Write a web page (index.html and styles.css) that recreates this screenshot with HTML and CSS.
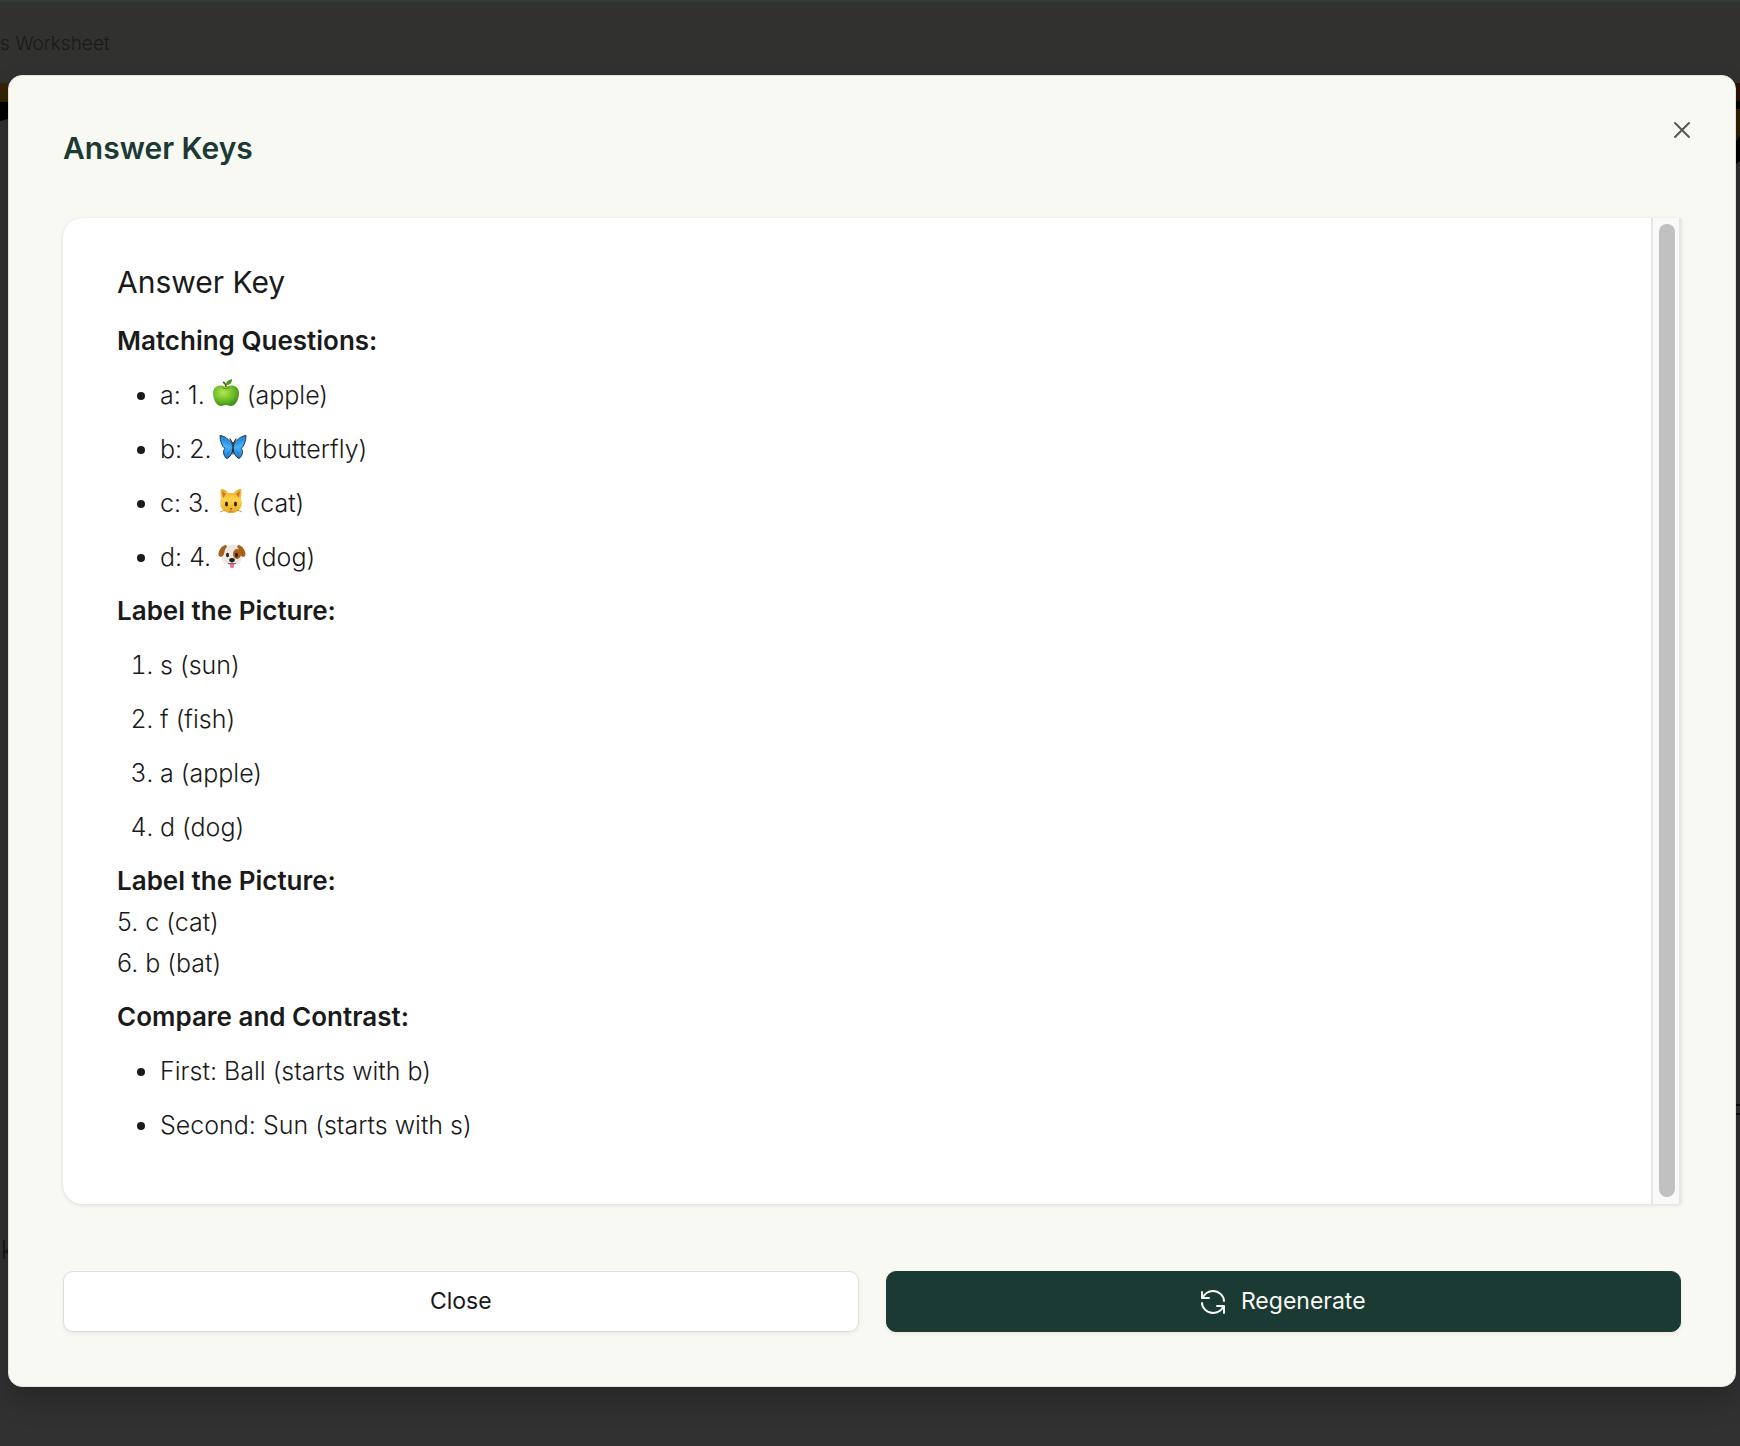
FILE: index.html
```html
<!DOCTYPE html>
<html lang="en">
<head>
  <meta charset="UTF-8">
  <meta name="viewport" content="width=device-width, initial-scale=1.0">
  <title>Answer Keys</title>
  <link rel="stylesheet" href="styles.css">
</head>
<body>
  <header class="page-header">
    <p class="page-title">s Worksheet</p>
  </header>

  <!-- page art that shows at both sides of the dialog -->
  <div class="page-art" aria-hidden="true">
    <svg class="art-left" width="8" height="40" viewBox="0 0 8 40">
      <rect width="8" height="19" fill="#332300"/>
      <path d="M0 19h8v17L0 38z" fill="#000"/>
    </svg>
    <svg class="art-right" width="5" height="82" viewBox="0 0 5 82">
      <path d="M0 0h5v78L0 82z" fill="#000"/>
      <rect width="5" height="18" fill="#2b1300"/>
      <path d="M0 26h5v26L0 60z" fill="#332000"/>
    </svg>
    <svg class="art-lines" width="5" height="14" viewBox="0 0 5 14">
      <path d="M0 2h5M0 11h5" stroke="#0c0c0c" stroke-width="2"/>
    </svg>
    <span class="page-letter">k</span>
  </div>

  <div class="dialog" role="dialog" aria-labelledby="dialogTitle">
    <div class="dialog-header">
      <h1 id="dialogTitle">Answer Keys</h1>
      <button class="close-icon" aria-label="Close dialog">
        <svg width="18" height="18" viewBox="0 0 18 18" fill="none" stroke="#555652" stroke-width="2" stroke-linecap="round">
          <path d="M2 2l14 14M16 2L2 16"/>
        </svg>
      </button>
    </div>

    <div class="answer-card">
      <div class="answers">
        <h2>Answer Key</h2>
        <p><strong>Matching Questions:</strong></p>
        <ul>
          <li>a: 1.
            <svg class="emoji" viewBox="0 0 28 28">
              <defs>
                <radialGradient id="apple" cx="0.4" cy="0.35" r="0.7">
                  <stop offset="0" stop-color="#b5e653"/>
                  <stop offset="0.55" stop-color="#6fbf2a"/>
                  <stop offset="1" stop-color="#3b8a12"/>
                </radialGradient>
              </defs>
              <path d="M14 8C10 5 1 6 1 14c0 7 4 13 8 13 2 0 3-1 5-1s3 1 5 1c4 0 8-6 8-13 0-8-9-9-13-6z" fill="url(#apple)"/>
              <path d="M14 8C14 6 13 4 11 3" fill="none" stroke="#6b4a25" stroke-width="1.500"/>
              <path d="M14 6c0-4 3-5 6-6 0 4-2 6-6 6z" fill="#3f9a1c"/>
              <path d="M10 8.500c2 1.500 5 1.500 8 0" fill="none" stroke="#4c9a1a" stroke-width="1"/>
            </svg>
            (apple)</li>
          <li>b: 2.
            <svg class="emoji" viewBox="0 0 28 28">
              <defs>
                <linearGradient id="wing" x1="0" y1="0" x2="0" y2="1">
                  <stop offset="0" stop-color="#1c84e0"/>
                  <stop offset="0.5" stop-color="#45b4fb"/>
                  <stop offset="1" stop-color="#1976cf"/>
                </linearGradient>
              </defs>
              <path d="M14 13C11 7 6 3 1 2.500c0 5 2 11 5 13C3 18 5 24 8 25.500c3-1 5-5 6-9 1 4 3 8 6 9 3-1.500 5-7.500 2-10 3-2 5-8 5-13-5 .5-10 4.500-13 10.500z" fill="url(#wing)" stroke="#14293e" stroke-width="0.900" stroke-linejoin="round"/>
              <path d="M13.500 14L4 6M14 15l-6 6M14.500 14L24 6M14 15l6 6" stroke="#1769ab" stroke-width="0.500"/>
              <path d="M14 10v11M14 11l-3-5M14 11l3-5" stroke="#222" stroke-width="1.200" stroke-linecap="round"/>
            </svg>
            (butterfly)</li>
          <li>c: 3.
            <svg class="emoji" viewBox="0 0 28 28">
              <defs>
                <linearGradient id="fur" x1="0" y1="0" x2="0" y2="1">
                  <stop offset="0" stop-color="#e9a82b"/>
                  <stop offset="0.45" stop-color="#ffd34d"/>
                  <stop offset="1" stop-color="#eba91e"/>
                </linearGradient>
              </defs>
              <path d="M4 2c3 0 6 2 7 4h6c1-2 4-4 7-4 1 4 0 7 0 10 3 8-3 14-10 14S1 20 4 12C4 9 3 6 4 2z" fill="url(#fur)"/>
              <path d="M5 4l4 3-3 4zM23 4l-4 3 3 4z" fill="#c77d1b"/>
              <ellipse cx="9.500" cy="17" rx="1.500" ry="2.500" fill="#33230f"/>
              <ellipse cx="18.500" cy="17" rx="1.500" ry="2.500" fill="#33230f"/>
              <path d="M12.500 21h3L14 23z" fill="#8a4b2a"/>
              <path d="M14 23v1M11 25c1 0 3 0 3-1 0 1 2 1 3 1M3 25l5-2M25 25l-5-2" fill="none" stroke="#b8862e" stroke-width="0.800"/>
            </svg>
            (cat)</li>
          <li>d: 4.
            <svg class="emoji" viewBox="0 0 28 28">
              <path d="M7 6c3-3 11-3 14 0 4 4 4 11 2 14-2 4-5 5-9 5s-7-1-9-5C3 17 3 10 7 6z" fill="#ece9e4"/>
              <path d="M8 4C4 4 0 10 .5 14c1 3 4 2 5 0C7 11 6 9 9 6zM20 4c4 0 8 6 7.500 10-1 3-4 2-5 0C21 11 22 9 19 6z" fill="#a8611b"/>
              <ellipse cx="19" cy="13" rx="4" ry="5" fill="#ae6016"/>
              <ellipse cx="9.500" cy="14" rx="1.500" ry="2.200" fill="#222"/>
              <ellipse cx="18.500" cy="14" rx="1.500" ry="2.200" fill="#222"/>
              <ellipse cx="14" cy="19" rx="2.800" ry="2" fill="#1d1d1d"/>
              <path d="M12 23h4v2c0 3-4 3-4 0z" fill="#f0708a"/>
              <path d="M14 20v2c-1 1-3 1-4 0M14 22c1 1 3 1 4 0" fill="none" stroke="#444" stroke-width="0.900"/>
            </svg>
            (dog)</li>
        </ul>
        <p><strong>Label the Picture:</strong></p>
        <ol>
          <li>s (sun)</li>
          <li>f (fish)</li>
          <li>a (apple)</li>
          <li>d (dog)</li>
        </ol>
        <p><strong>Label the Picture:</strong><br>5. c (cat)<br>6. b (bat)</p>
        <p><strong>Compare and Contrast:</strong></p>
        <ul>
          <li>First: Ball (starts with b)</li>
          <li>Second: Sun (starts with s)</li>
        </ul>
      </div>
      <div class="scrollbar"><div class="thumb"></div></div>
    </div>

    <div class="actions">
      <button class="btn">Close</button>
      <button class="btn btn-primary">
        <svg width="24" height="24" viewBox="0 0 24 24" fill="none" stroke="currentColor" stroke-width="2" stroke-linecap="round" stroke-linejoin="round">
          <path d="M1 2v6h7M1.500 8C4 3 8 1 12 1c6 0 11 5 11 10"/>
          <path d="M23 23v-7h-7M22.500 16.500C20 21 16 23 12 23 6 23 1 18 1 13"/>
        </svg>
        Regenerate
      </button>
    </div>
  </div>
</body>
</html>
```
FILE: styles.css
```css
* {
  box-sizing: border-box;
}
body {
  margin: 0;
  min-height: 100vh;
  background: #313131;
  color: #1a1a1a;
  font-family: Inter, "Liberation Sans", sans-serif;
  font-size: 25px;
  font-weight: 300;
  line-height: 41px;
}
h1, h2, p, ul, ol {
  margin: 0;
}
button {
  font: inherit;
  cursor: pointer;
}

/* page behind the dialog */
.page-header {
  height: 75px;
  padding-top: 22px;
  background: #31312f;
  border-top: 2px solid #333a3c;
}
.page-title {
  color: #1a1a1a;
  font-size: 19px;
  line-height: 40px;
}
.art-left {
  position: absolute;
  top: 83px;
  left: 0;
}
.art-right {
  position: absolute;
  top: 83px;
  right: 0;
}
.art-lines {
  position: absolute;
  top: 1103px;
  right: 0;
}
.page-letter {
  position: absolute;
  top: 1230px;
  left: 1px;
  color: #151515;
}

.dialog {
  position: relative;
  margin: 0 4px 0 8px;
  padding: 54px;
  background: #f8f9f3;
  border: 1px solid #e2e3de;
  border-radius: 14px;
  box-shadow: 0 14px 28px rgba(0,0,0,0.2);
}
.dialog-header {
  display: flex;
  justify-content: space-between;
  align-items: flex-start;
  margin-bottom: 52px;
}
h1 {
  color: #1b3a34;
  font-size: 30px;
  font-weight: 600;
  line-height: 36px;
}
.close-icon {
  display: flex;
  margin: -9px -20px 0 0;
  padding: 0 10px;
  border: none;
  background: none;
}

.answer-card {
  display: flex;
  background: white;
  border-radius: 20px 0 0 20px;
  box-shadow: 0 1px 4px rgba(0,0,0,0.12);
}
.answers {
  flex: 1;
  padding: 44px 54px 45px;
}
h2 {
  margin-bottom: 18px;
  font-size: 30px;
  font-weight: 400;
  line-height: 41px;
}
.answers p, .answers li {
  margin-bottom: 13px;
}
.answers ul, .answers ol {
  padding-left: 43px;
}
strong {
  font-size: 26px;
  font-weight: 600;
  line-height: 1;
}
.emoji {
  width: 28px;
  height: 28px;
  vertical-align: -3px;
}
.scrollbar {
  width: 30px;
  padding: 6px 4px 7px 6px;
  background: #f9f9f9;
  border: solid #e6e6e6;
  border-width: 0 2px;
}
.thumb {
  width: 16px;
  height: 100%;
  background: #c1c1c1;
  border-radius: 8px;
}

.actions {
  display: grid;
  grid-template-columns: 1fr 1fr;
  gap: 27px;
  margin-top: 67px;
}
.btn {
  display: flex;
  justify-content: center;
  align-items: center;
  gap: 16px;
  height: 61px;
  background: white;
  color: #1a1a1a;
  border: 1px solid #dededb;
  border-radius: 10px;
  box-shadow: 0 2px 4px rgba(0,0,0,0.06);
  font-size: 23px;
  font-weight: 400;
}
.btn-primary {
  background: #1b3a34;
  border-color: #1b3a34;
  color: #f8f9f3;
}
```
